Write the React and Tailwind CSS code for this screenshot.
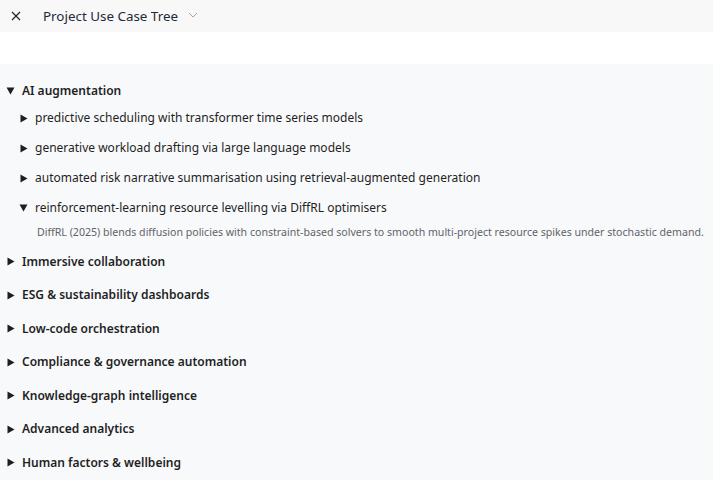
import React from "react";

const Right = () => (
  <svg width="8" height="9" viewBox="0 0 8 9" className="shrink-0">
    <path d="M0.5 0.5 L7.5 4.5 L0.5 8.5 Z" fill="#1f1f1f" />
  </svg>
);
const Down = () => (
  <svg width="9" height="8" viewBox="0 0 9 8" className="shrink-0">
    <path d="M0.5 0.5 L8.5 0.5 L4.5 7.5 Z" fill="#1f1f1f" />
  </svg>
);

const children = [
  "predictive scheduling with transformer time series models",
  "generative workload drafting via large language models",
  "automated risk narrative summarisation using retrieval-augmented generation",
];

const others = [
  "Immersive collaboration",
  "ESG & sustainability dashboards",
  "Low-code orchestration",
  "Compliance & governance automation",
  "Knowledge-graph intelligence",
  "Advanced analytics",
  "Human factors & wellbeing",
];

export default function App() {
  return (
    <div
      className="w-[713px] h-[480px] overflow-hidden bg-[#f8f9fb] text-[#1f1f1f]"
      style={{ fontFamily: '"Noto Sans", "Open Sans", sans-serif' }}
    >
      <div className="h-[32px] bg-[#f8f8f8] flex items-center">
        <div className="w-[30px] flex justify-center pl-[1px]">
          <svg width="10" height="10" viewBox="0 0 10 10">
            <path d="M1 1 L9 9 M9 1 L1 9" stroke="#222" strokeWidth="1.2" />
          </svg>
        </div>
        <span className="ml-[13px] text-[13.4px] text-[#1f2a3a]">Project Use Case Tree</span>
        <svg width="10" height="6" viewBox="0 0 10 6" className="ml-[10px] mb-[3px]">
          <path d="M1 1 L5 5 L9 1" stroke="#a0a4ab" strokeWidth="1" fill="none" />
        </svg>
      </div>
      <div className="h-[32px] bg-white" />
      <div className="flex flex-col gap-[7.5px] pt-[14px]">
        <div className="flex flex-col">
          <div className="h-[25px] flex items-center pl-[6px] gap-[7px]">
            <Down />
            <span className="text-[12px] font-[560]">AI augmentation</span>
          </div>
          {children.map((c) => (
            <div key={c} className="h-[30px] flex items-center pl-[20px] gap-[7px]">
              <Right />
              <span className="text-[12px]">{c}</span>
            </div>
          ))}
          <div className="h-[30px] flex items-center pl-[19px] gap-[7px]">
            <Down />
            <span className="text-[12px]">reinforcement-learning resource levelling via DiffRL optimisers</span>
          </div>
          <div className="mt-[2px] h-[16px] flex items-center pl-[37px] text-[10.6px] text-[#5f6368] whitespace-nowrap">
            DiffRL (2025) blends diffusion policies with constraint-based solvers to smooth multi-project resource spikes under stochastic demand.
          </div>
        </div>
        {others.map((o) => (
          <div key={o} className="h-[26px] flex items-center pl-[7px] gap-[7px]">
            <Right />
            <span className="text-[12px] font-[560]">{o}</span>
          </div>
        ))}
      </div>
    </div>
  );
}
